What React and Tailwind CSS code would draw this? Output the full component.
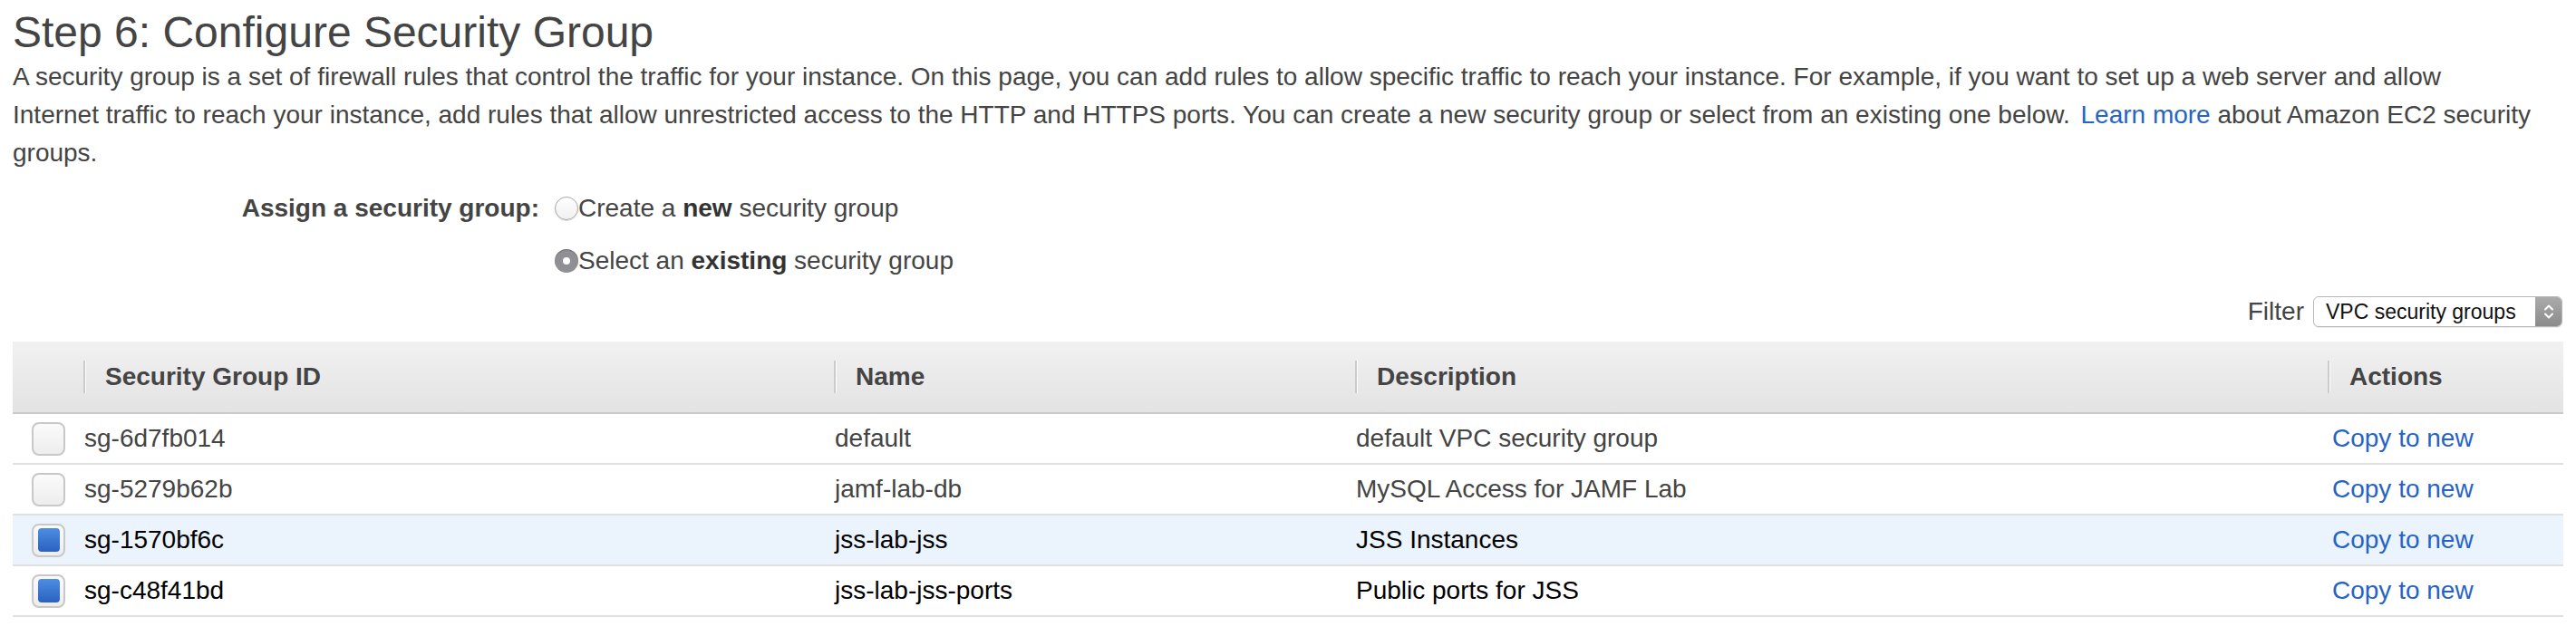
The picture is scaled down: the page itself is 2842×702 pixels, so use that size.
import React from 'react'

const rows = [
  { id: 'sg-6d7fb014', name: 'default', desc: 'default VPC security group', checked: false },
  { id: 'sg-5279b62b', name: 'jamf-lab-db', desc: 'MySQL Access for JAMF Lab', checked: false },
  { id: 'sg-1570bf6c', name: 'jss-lab-jss', desc: 'JSS Instances', checked: true, highlight: true },
  { id: 'sg-c48f41bd', name: 'jss-lab-jss-ports', desc: 'Public ports for JSS', checked: true },
]

// ─── Form controls ───────────────────────────────────────────────
function Radio({ checked }) {
  if (checked) {
    return (
      <span className="flex h-[26px] w-[26px] shrink-0 items-center justify-center rounded-full bg-[#8f8f94] shadow-[inset_0_1px_1px_rgba(0,0,0,0.25)]">
        <span className="h-[8px] w-[8px] rounded-full bg-white" />
      </span>
    )
  }
  return (
    <span className="h-[26px] w-[26px] shrink-0 rounded-full border border-[#a8a8a8] bg-linear-to-b from-white to-[#f0f0f0] shadow-[0_1px_1px_rgba(0,0,0,0.15)]" />
  )
}

function Checkbox({ checked }) {
  return (
    <span className="flex h-[37px] w-[37px] items-center justify-center rounded-[8px] border-2 border-[#c8c8c8] bg-linear-to-b from-[#fbfbfb] to-[#ededed]">
      {checked && <span className="h-[26px] w-[24px] rounded-[4px] bg-linear-to-b from-[#4d8de4] to-[#2a62bf]" />}
    </span>
  )
}

function FilterSelect() {
  return (
    <div className="flex h-[34px] w-[275px] items-stretch overflow-hidden rounded-[6px] border border-[#b8b8b8] bg-white shadow-[0_1px_1px_rgba(0,0,0,0.08)]">
      <span className="flex flex-1 items-center pl-[13px] text-[23px] text-[#111]">VPC security groups</span>
      <span className="flex w-[29px] items-center justify-center bg-linear-to-b from-[#ababab] to-[#8b8b8b]">
        <svg width="12" height="20" viewBox="0 0 12 20" fill="none" stroke="white" strokeWidth="2" strokeLinecap="round" strokeLinejoin="round">
          <path d="M2 7.5 6 3.5 10 7.5" />
          <path d="M2 12.5 6 16.5 10 12.5" />
        </svg>
      </span>
    </div>
  )
}

// ─── Table ───────────────────────────────────────────────────────
const cols = 'grid grid-cols-[78px_828px_575px_1073px_1fr]'

function HeadCell({ children }) {
  return (
    <div className="flex items-center">
      <span className="h-[36px] w-[3px] border-l-2 border-r border-l-[#cbcbcb] border-r-white" />
      <span className="ml-[21px] font-bold">{children}</span>
    </div>
  )
}

function SecurityGroupTable() {
  return (
    <div className="mt-[12px] text-[28px]">
      <div className={`${cols} h-[80px] border-b-2 border-[#cacaca] bg-linear-to-b from-[#f1f1f1] to-[#e3e3e3] text-[#444]`}>
        <div />
        <HeadCell>Security Group ID</HeadCell>
        <HeadCell>Name</HeadCell>
        <HeadCell>Description</HeadCell>
        <HeadCell>Actions</HeadCell>
      </div>

      {rows.map(row => (
        <div
          key={row.id}
          className={`${cols} h-[56px] items-center border-b-2 border-[#e0e0e0] ${row.highlight ? 'bg-[#ebf3fd]' : 'bg-white'} ${row.checked ? 'text-[#000]' : 'text-[#444]'}`}
        >
          <div className="pl-[21px]">
            <Checkbox checked={row.checked} />
          </div>
          <div className="pl-px">{row.id}</div>
          <div className="pl-px">{row.name}</div>
          <div className="pl-px">{row.desc}</div>
          <div className="pl-[5px] text-[#2664c3]">Copy to new</div>
        </div>
      ))}
    </div>
  )
}

// ─── App Root ────────────────────────────────────────────────────
export default function App() {
  return (
    <div className="min-h-screen bg-white px-[14px] font-['Liberation_Sans',Arial,sans-serif] text-[#444]">
      <h1 className="pt-[8px] text-[48px] leading-[56px]">Step 6: Configure Security Group</h1>

      <p className="text-[28px] leading-[42px]">
        A security group is a set of firewall rules that control the traffic for your instance. On this page, you can add rules to allow specific traffic to reach your instance. For example, if you want to set up a web server and allow<br />
        Internet traffic to reach your instance, add rules that allow unrestricted access to the HTTP and HTTPS ports. You can create a new security group or select from an existing one below.{' '}
        <a className="ml-[4px] text-[#2664c3]">Learn more</a> about Amazon EC2 security<br />
        groups.
      </p>

      <div className="mt-[20px] grid grid-cols-[598px_1fr] gap-y-[18px] text-[28px] leading-[40px]">
        <div className="pr-[17px] text-right font-bold">Assign a security group:</div>
        <div className="flex items-center">
          <Radio />
          <span>Create a <b className="text-[#333]">new</b> security group</span>
        </div>
        <div />
        <div className="flex items-center">
          <Radio checked />
          <span>Select an <b className="text-[#333]">existing</b> security group</span>
        </div>
      </div>

      <div className="mt-[15px] flex items-center justify-end gap-[10px] pr-[1px]">
        <span className="text-[28px]">Filter</span>
        <FilterSelect />
      </div>

      <SecurityGroupTable />
    </div>
  )
}
